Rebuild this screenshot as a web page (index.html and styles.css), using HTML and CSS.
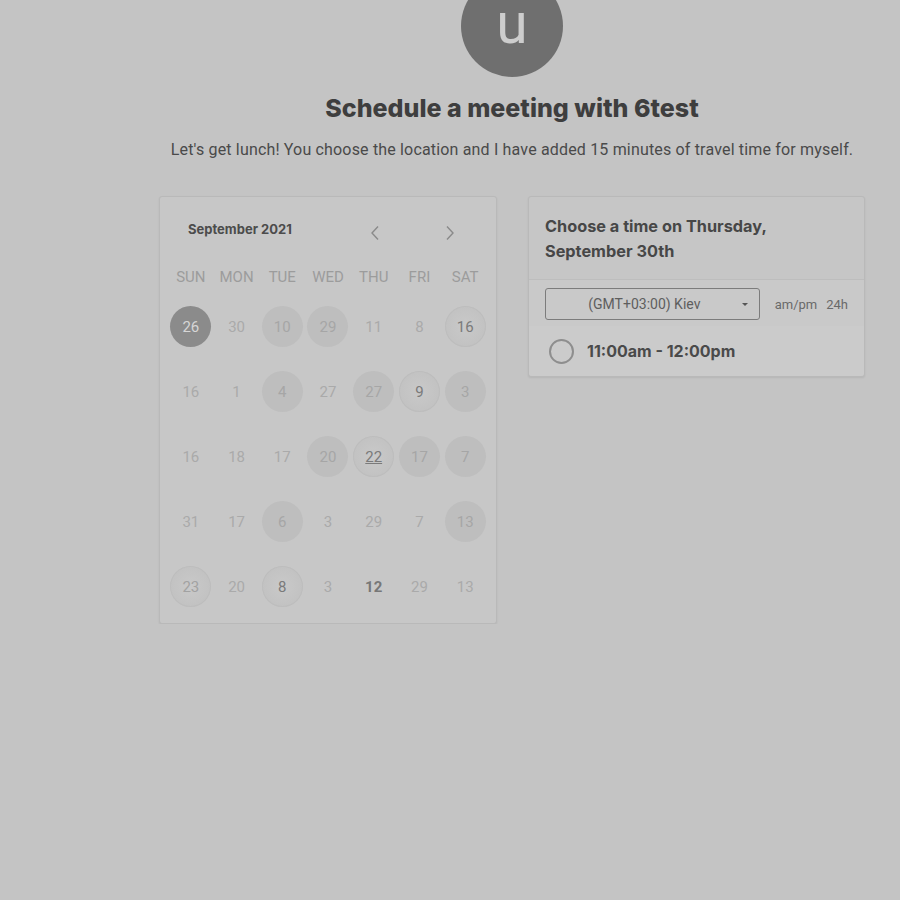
FILE: index.html
```html
<!DOCTYPE html>
<html>
<head>
<meta charset="utf-8">
<link rel="stylesheet" href="styles.css">
</head>
<body>
<div class="page">
  <header class="intro">
    <div class="avatar">u</div>
    <h1 class="title">Schedule a meeting with 6test</h1>
    <p class="subtitle">Let's get lunch! You choose the location and I have added 15 minutes of travel time for myself.</p>
  </header>
  <div class="cards">
    <section class="calendar">
      <div class="cal-head">
        <span class="month">September 2021</span>
        <span class="nav prev"><svg width="10" height="16" viewBox="0 0 10 16"><polyline points="8,1.5 2,8 8,14.5" fill="none" stroke="#8a8a8a" stroke-width="1.4"/></svg></span>
        <span class="nav next"><svg width="10" height="16" viewBox="0 0 10 16"><polyline points="2,1.5 8,8 2,14.5" fill="none" stroke="#8a8a8a" stroke-width="1.4"/></svg></span>
      </div>
      <div class="grid week">
        <span>SUN</span><span>MON</span><span>TUE</span><span>WED</span><span>THU</span><span>FRI</span><span>SAT</span>
      </div>
      <div class="grid days">
        <span class="d sel">26</span><span class="d">30</span><span class="d av">10</span><span class="d av">29</span><span class="d">11</span><span class="d">8</span><span class="d tx">16</span>
        <span class="d">16</span><span class="d">1</span><span class="d av">4</span><span class="d">27</span><span class="d av">27</span><span class="d tx">9</span><span class="d av">3</span>
        <span class="d">16</span><span class="d">18</span><span class="d">17</span><span class="d av">20</span><span class="d tx ul">22</span><span class="d av">17</span><span class="d av">7</span>
        <span class="d">31</span><span class="d">17</span><span class="d av">6</span><span class="d">3</span><span class="d">29</span><span class="d">7</span><span class="d av">13</span>
        <span class="d tx light">23</span><span class="d">20</span><span class="d tx">8</span><span class="d">3</span><span class="d today">12</span><span class="d">29</span><span class="d">13</span>
      </div>
    </section>
    <section class="times">
      <div class="times-head">Choose a time on Thursday,<br>September 30th</div>
      <div class="tz-row">
        <div class="tz-select"><span>(GMT+03:00) Kiev</span><span class="caret"></span></div>
        <div class="fmt"><span>am/pm</span><span>24h</span></div>
      </div>
      <div class="slot">
        <span class="radio"></span>
        <span class="slot-text">11:00am - 12:00pm</span>
      </div>
    </section>
  </div>
</div>
</body>
</html>
```
FILE: styles.css
```css
html, body {
  margin: 0;
  padding: 0;
  background: #c4c4c4;
}
body {
  font-family: Roboto, "Liberation Sans", sans-serif;
  color: #4a4a4a;
}
.page {
  width: 706px;
  margin-left: 159px;
}
.intro {
  display: flex;
  flex-direction: column;
  align-items: center;
}
.avatar {
  width: 102px;
  height: 102px;
  margin-top: -25px;
  border-radius: 50%;
  background: #6f6f6f;
  color: #cdcdcd;
  font-family: Roboto, sans-serif;
  font-size: 57px;
  line-height: 98px;
  text-align: center;
}
.title {
  margin: 16px 0 0;
  font-family: Inter, "Liberation Sans", sans-serif;
  font-weight: 800;
  font-size: 25px;
  line-height: 30px;
  color: #3e3e3e;
  letter-spacing: 0;
}
.subtitle {
  margin: 17px 0 0;
  font-size: 16px;
  line-height: 20px;
  color: #4a4a4a;
  letter-spacing: 0.17px;
  white-space: nowrap;
}
.cards {
  display: flex;
  gap: 31px;
  margin-top: 36px;
  align-items: flex-start;
}
.calendar {
  width: 336px;
  height: 426px;
  background: #c7c7c7;
  border: 1px solid #b9b9b9;
  border-radius: 3px;
  box-shadow: 0 1px 2px rgba(0,0,0,0.08);
}
.cal-head {
  display: flex;
  align-items: center;
  height: 63px;
  padding-left: 28px;
}
.month {
  font-family: Inter, sans-serif;
  font-weight: 700;
  font-size: 13px;
  color: #4c4c4c;
  width: 182px;
  padding-top: 1px;
}
.nav {
  display: flex;
  padding-top: 8px;
}
.nav.next {
  margin-left: 65px;
}
.grid {
  display: grid;
  grid-template-columns: repeat(7, 1fr);
  padding: 0 8px;
}
.week span {
  text-align: center;
  font-size: 15px;
  line-height: 24px;
  color: #9c9c9c;
  padding-top: 5px;
}
.days {
  margin-top: 5px;
  grid-auto-rows: 65px;
}
.d {
  justify-self: center;
  align-self: center;
  width: 41px;
  height: 41px;
  border-radius: 50%;
  display: flex;
  align-items: center;
  justify-content: center;
  font-size: 15px;
  color: #aaaaaa;
}
.d.av {
  background: #bebebe;
  color: #a6a6a6;
}
.d.sel {
  background: #8b8b8b;
  color: #d6d6d6;
}
.d.tx {
  background: radial-gradient(circle, #c9c9c9 0%, #c3c3c3 60%, #bfbfbf 100%);
  box-shadow: inset 0 0 0 1px #bdbdbd;
  color: #7a7a7a;
}
.d.tx.light {
  color: #a2a2a2;
}
.d.ul {
  text-decoration: underline;
}
.d.today {
  font-weight: 700;
  color: #777777;
}
.times {
  width: 335px;
  background: #c6c6c6;
  border: 1px solid #b9b9b9;
  border-radius: 3px;
  box-shadow: 0 1px 2px rgba(0,0,0,0.08);
}
.times-head {
  padding: 17px 17px 15px 16px;
  font-family: Inter, sans-serif;
  font-weight: 700;
  font-size: 16.3px;
  line-height: 25px;
  color: #474747;
  border-bottom: 1px solid #bdbdbd;
}
.tz-row {
  display: flex;
  align-items: center;
  background: #c9c9c9;
  padding: 8px 16px 6px;
}
.tz-select {
  border: 1px solid #7c7c7c;
  border-radius: 3px;
  display: flex;
  align-items: center;
  justify-content: center;
  padding-right: 16px;
  box-sizing: border-box;
  width: 215px;
  height: 32px;
  position: relative;
  font-size: 14px;
  color: #5e5e5e;
}
.caret {
  position: absolute;
  right: 11px;
  top: 14px;
  width: 0;
  height: 0;
  border-left: 3px solid transparent;
  border-right: 3px solid transparent;
  border-top: 3px solid #555;
}
.fmt {
  display: flex;
  gap: 9px;
  margin-left: 15px;
  font-size: 13px;
  color: #6a6a6a;
}
.slot {
  display: flex;
  align-items: center;
  height: 50px;
  background: #cbcbcb;
  padding-left: 20px;
  border-radius: 0 0 3px 3px;
}
.radio {
  width: 21px;
  height: 21px;
  border: 2px solid #8e8e8e;
  border-radius: 50%;
}
.slot-text {
  margin-left: 13px;
  font-family: Inter, sans-serif;
  font-weight: 700;
  font-size: 16px;
  color: #4a4a4a;
}
```
